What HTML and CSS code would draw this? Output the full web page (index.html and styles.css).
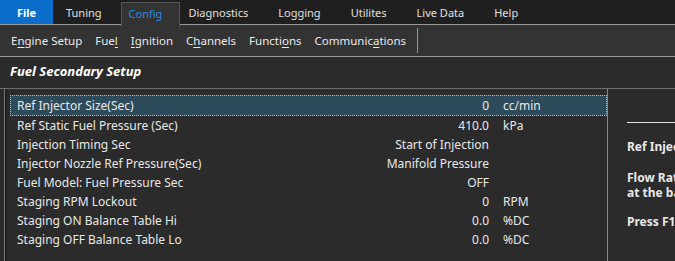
FILE: index.html
```html
<!DOCTYPE html>
<html>
<head>
    <title>Fuel Secondary Setup</title>
    <link rel="stylesheet" href="styles.css">
</head>
<body>
    <div class="tabs">
        <div class="tab tab-file">File</div>
        <div class="tab">Tuning</div>
        <div class="tab active">Config</div>
        <div class="tab">Diagnostics</div>
        <div class="tab">Logging</div>
        <div class="tab">Utilites</div>
        <div class="tab">Live Data</div>
        <div class="tab">Help</div>
    </div>

    <div class="toolbar">
        <span class="tool">E<u>n</u>gine Setup</span>
        <span class="tool">Fue<u>l</u></span>
        <span class="tool"><u>I</u>gnition</span>
        <span class="tool">C<u>h</u>annels</span>
        <span class="tool">Functi<u>o</u>ns</span>
        <span class="tool">Communic<u>a</u>tions</span>
        <span class="sep"></span>
    </div>

    <div class="title">Fuel Secondary Setup</div>

    <div class="content">
        <div class="grid">
            <div class="row selected">
                <span class="name">Ref Injector Size(Sec)</span>
                <span class="value">0</span>
                <span class="unit">cc/min</span>
            </div>
            <div class="row">
                <span class="name">Ref Static Fuel Pressure (Sec)</span>
                <span class="value">410.0</span>
                <span class="unit">kPa</span>
            </div>
            <div class="row">
                <span class="name">Injection Timing Sec</span>
                <span class="value">Start of Injection</span>
                <span class="unit"></span>
            </div>
            <div class="row">
                <span class="name">Injector Nozzle Ref Pressure(Sec)</span>
                <span class="value">Manifold Pressure</span>
                <span class="unit"></span>
            </div>
            <div class="row">
                <span class="name">Fuel Model: Fuel Pressure Sec</span>
                <span class="value">OFF</span>
                <span class="unit"></span>
            </div>
            <div class="row">
                <span class="name">Staging RPM Lockout</span>
                <span class="value">0</span>
                <span class="unit">RPM</span>
            </div>
            <div class="row">
                <span class="name">Staging ON Balance Table Hi</span>
                <span class="value">0.0</span>
                <span class="unit">%DC</span>
            </div>
            <div class="row">
                <span class="name">Staging OFF Balance Table Lo</span>
                <span class="value">0.0</span>
                <span class="unit">%DC</span>
            </div>
        </div>

        <div class="help">
            <div class="help-rule"></div>
            <p class="help-head">Ref Injector Size(Sec)</p>
            <p class="help-body">Flow Rate of the secondary injectors<br>at the base fuel pressure</p>
            <p class="help-foot">Press F1 for more help</p>
        </div>
    </div>
</body>
</html>
```

FILE: styles.css
```css
body {
    margin: 0;
    background: #2b2b2b;
    color: #e8e8e8;
    font-family: "Noto Sans", "Open Sans", sans-serif;
    font-size: 12px;
    overflow: hidden;
}

.tabs {
    display: flex;
    height: 25px;
    background: #1f1f1f;
    border-bottom: 1px solid #9a9a9a;
    box-sizing: border-box;
    font-size: 11px;
    white-space: nowrap;
}
.tab {
    padding: 0 15px;
    line-height: 25px;
    color: #e0e0e0;
}
.tab-file {
    width: 53px;
    box-sizing: border-box;
    text-align: center;
    padding: 0;
    background: #0a6dc9;
    color: #fff;
    font-weight: bold;
    margin-right: -2px;
}
.tab.active {
    background: #333333;
    color: #2a8ae0;
    border: 1px solid #555;
    border-bottom: none;
    margin-top: 2px;
    height: 24px;
    line-height: 22px;
    padding: 0 17px 0 7px;
    margin-left: 4px;
    margin-right: -7px;
}

.toolbar {
    display: flex;
    align-items: center;
    height: 32px;
    background: #333333;
    border-bottom: 1px solid #9a9a9a;
    box-sizing: border-box;
    padding-left: 11px;
    gap: 13px;
    font-size: 11.5px;
    white-space: nowrap;
}
.tool { color: #eaeaea; }
.tool u { text-underline-offset: 2px; }
.sep {
    width: 1px;
    height: 25px;
    background: #9a9a9a;
    margin-left: -2px;
}

.title {
    height: 32px;
    line-height: 28px;
    padding-left: 10px;
    font-weight: bold;
    font-style: italic;
    font-size: 13px;
    color: #ffffff;
    border-bottom: 1px solid #6e6e6e;
    box-sizing: border-box;
}

.content {
    display: flex;
}
.grid {
    flex: none;
    width: 604px;
    margin-left: 4px;
    height: 175px;
    border-left: 1px solid #777;
    border-right: 1px solid #888;
    padding: 6px 0 0 5px;
    box-sizing: border-box;
    box-shadow: inset 2px 0 0 #1e1e1e;
}
.row {
    display: flex;
    height: 19px;
    line-height: 19px;
    width: 597px;
    box-sizing: border-box;
    padding-left: 7px;
    white-space: nowrap;
}
.row.selected {
    background: #2e4b5b;
    outline: 1px dotted #7fcbe6;
    outline-offset: -1px;
    height: 21px;
    line-height: 21px;
}
.name { width: 300px; }
.value {
    width: 172px;
    text-align: right;
}
.unit { padding-left: 14px; }

.help {
    flex: 1;
    min-width: 0;
    overflow: hidden;
    padding-left: 19px;
    padding-top: 33px;
    font-weight: bold;
    white-space: nowrap;
}
.help-rule {
    height: 1px;
    background: #e0e0e0;
    width: 200px;
}
.help p {
    margin: 0;
    line-height: 15px;
}
.help .help-head { margin-top: 16px; }
.help .help-body { margin-top: 16px; }
.help .help-foot { margin-top: 14px; }
```
